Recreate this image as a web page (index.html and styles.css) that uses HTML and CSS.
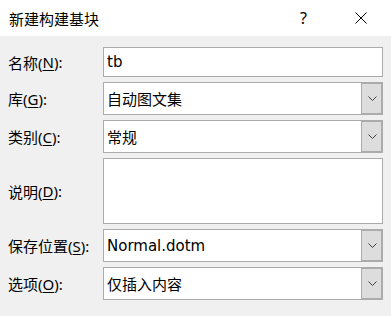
FILE: index.html
```html
<!DOCTYPE html>
<html>
<head>
    <title>新建构建基块</title>
    <link rel="stylesheet" href="styles.css">
</head>
<body>

    <div class="dialog">
        <div class="titlebar">
            <span class="title">新建构建基块</span>
            <span class="help">?</span>
            <span class="close">
                <svg width="12" height="12" viewBox="0 0 12 12">
                    <path d="M0.5 0.5 L11.5 11.5 M11.5 0.5 L0.5 11.5" stroke="#000" stroke-width="1" fill="none"/>
                </svg>
            </span>
        </div>

        <div class="form">
            <label class="lbl row-name">名称(<u>N</u>):</label>
            <div class="field input row-name">tb</div>

            <label class="lbl row-sel">库(<u>G</u>):</label>
            <div class="field combo row-sel">
                <span class="value">自动图文集</span>
                <span class="drop"><svg width="9" height="5" viewBox="0 0 9 5"><polyline points="0.5,0.5 4.5,4.5 8.5,0.5" stroke="#404040" fill="none"/></svg></span>
            </div>

            <label class="lbl row-sel">类别(<u>C</u>):</label>
            <div class="field combo row-sel">
                <span class="value">常规</span>
                <span class="drop"><svg width="9" height="5" viewBox="0 0 9 5"><polyline points="0.5,0.5 4.5,4.5 8.5,0.5" stroke="#404040" fill="none"/></svg></span>
            </div>

            <label class="lbl row-desc">说明(<u>D</u>):</label>
            <div class="field textarea row-desc"></div>

            <label class="lbl row-sel">保存位置(<u>S</u>):</label>
            <div class="field combo row-sel">
                <span class="value">Normal.dotm</span>
                <span class="drop"><svg width="9" height="5" viewBox="0 0 9 5"><polyline points="0.5,0.5 4.5,4.5 8.5,0.5" stroke="#404040" fill="none"/></svg></span>
            </div>

            <label class="lbl row-sel">选项(<u>O</u>):</label>
            <div class="field combo row-sel">
                <span class="value">仅插入内容</span>
                <span class="drop"><svg width="9" height="5" viewBox="0 0 9 5"><polyline points="0.5,0.5 4.5,4.5 8.5,0.5" stroke="#404040" fill="none"/></svg></span>
            </div>
        </div>
    </div>

</body>
</html>
```

FILE: styles.css
```css
body {
    margin: 0;
    font-family: "Noto Sans", "Noto Sans CJK SC", sans-serif;
    font-size: 15px;
    color: #000;
    background-color: #f0f0f0;
}

.dialog {
    width: 391px;
    height: 316px;
    background-color: #f0f0f0;
}

.titlebar {
    height: 36px;
    background-color: white;
    display: flex;
    align-items: center;
    padding-left: 9px;
}

.title {
    flex: 1;
    margin-top: 1px;
}

.help {
    width: 10px;
    margin-right: 45px;
    font-size: 16px;
}

.close {
    width: 12px;
    height: 12px;
    margin-right: 24px;
    display: flex;
}

.form {
    display: grid;
    grid-template-columns: 95px 280px;
    row-gap: 5px;
    padding: 11px 0 0 8px;
}

.lbl {
    display: flex;
    align-items: center;
    white-space: nowrap;
}

.lbl u {
    text-underline-offset: 2px;
}

.row-name { height: 30px; }
.row-sel { height: 33px; }
.row-desc { height: 66px; }

.field {
    box-sizing: border-box;
    background-color: white;
    border: 1px solid #ababab;
}

.input {
    display: flex;
    align-items: center;
    padding-left: 3px;
    font-family: "DejaVu Sans", "Noto Sans CJK SC", sans-serif;
}

.combo {
    display: flex;
    align-items: stretch;
}

.combo .value {
    flex: 1;
    display: flex;
    align-items: center;
    padding-left: 3px;
    font-family: "DejaVu Sans", "Noto Sans CJK SC", sans-serif;
}

.drop {
    width: 20px;
    background-color: #dddddd;
    border-left: 1px solid #ababab;
    box-shadow: inset -1px -1px 0 #ababab, inset 0 1px 0 #ababab;
    display: flex;
    align-items: center;
    justify-content: center;
}
```
